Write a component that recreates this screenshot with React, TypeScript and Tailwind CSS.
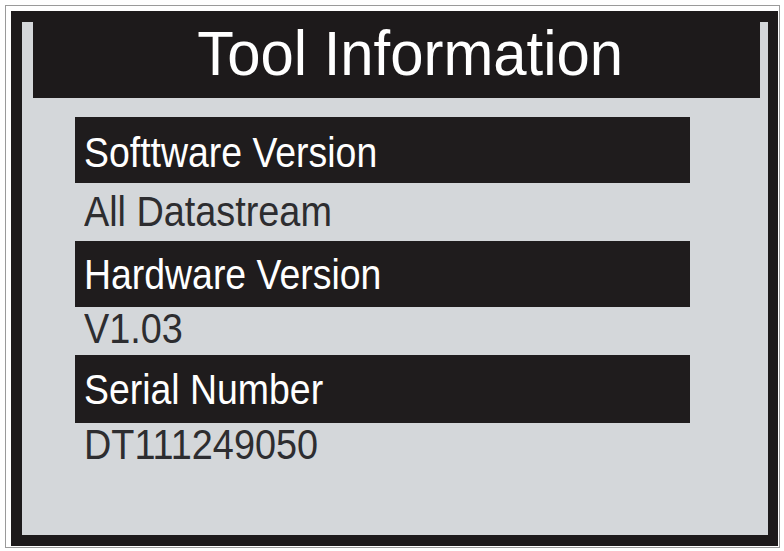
import React from 'react';

const ROWS = [
  {
    label: "Softtware Version",
    value: "All Datastream",
    barClass: "mt-[19px] h-[66px] pt-[14px]",
    valueClass: "h-[58px] pt-[8px]",
  },
  {
    label: "Hardware Version",
    value: "V1.03",
    barClass: "h-[66px] pt-[12px]",
    valueClass: "h-[48px] pt-[1px]",
  },
  {
    label: "Serial Number",
    value: "DT111249050",
    barClass: "h-[68px] pt-[13px]",
    valueClass: "h-[48px] pt-[1px]",
  },
];

const App: React.FC = () => {
  return (
    <div className="w-[784px] h-[551px] bg-white pt-[5px] pl-[5px] pr-[4px] pb-[3px] font-['Liberation_Sans',Arial,sans-serif]">
      <div className="h-full border border-[#9a9a9a] pt-[5px] pl-[5px] pr-[1px] pb-[1px]">
        {/* Screen frame */}
        <div className="h-full border-[11px] border-r-[10px] border-[#1d1a1b] bg-[#d4d7da] pl-[11px] pr-[8px] flex flex-col">
          {/* Title */}
          <div className="h-[76px] shrink-0 bg-[#1d1a1b] flex justify-center pl-[28px]">
            <span className="inline-block text-white text-[63px] leading-[63px] scale-x-[0.95] whitespace-nowrap">
              Tool Information
            </span>
          </div>

          {ROWS.map((row) => (
            <div key={row.label} className="flex flex-col">
              <div className={`ml-[42px] w-[615px] bg-[#1f1c1d] pl-[9px] ${row.barClass}`}>
                <span className="inline-block origin-left text-white text-[43px] leading-[42px] scale-x-[0.87] whitespace-nowrap">
                  {row.label}
                </span>
              </div>
              <div className={`ml-[42px] pl-[9px] ${row.valueClass}`}>
                <span className="inline-block origin-left text-[#2d2d30] text-[42px] leading-[42px] scale-x-[0.9] whitespace-nowrap">
                  {row.value}
                </span>
              </div>
            </div>
          ))}
        </div>
      </div>
    </div>
  );
};

export default App;
